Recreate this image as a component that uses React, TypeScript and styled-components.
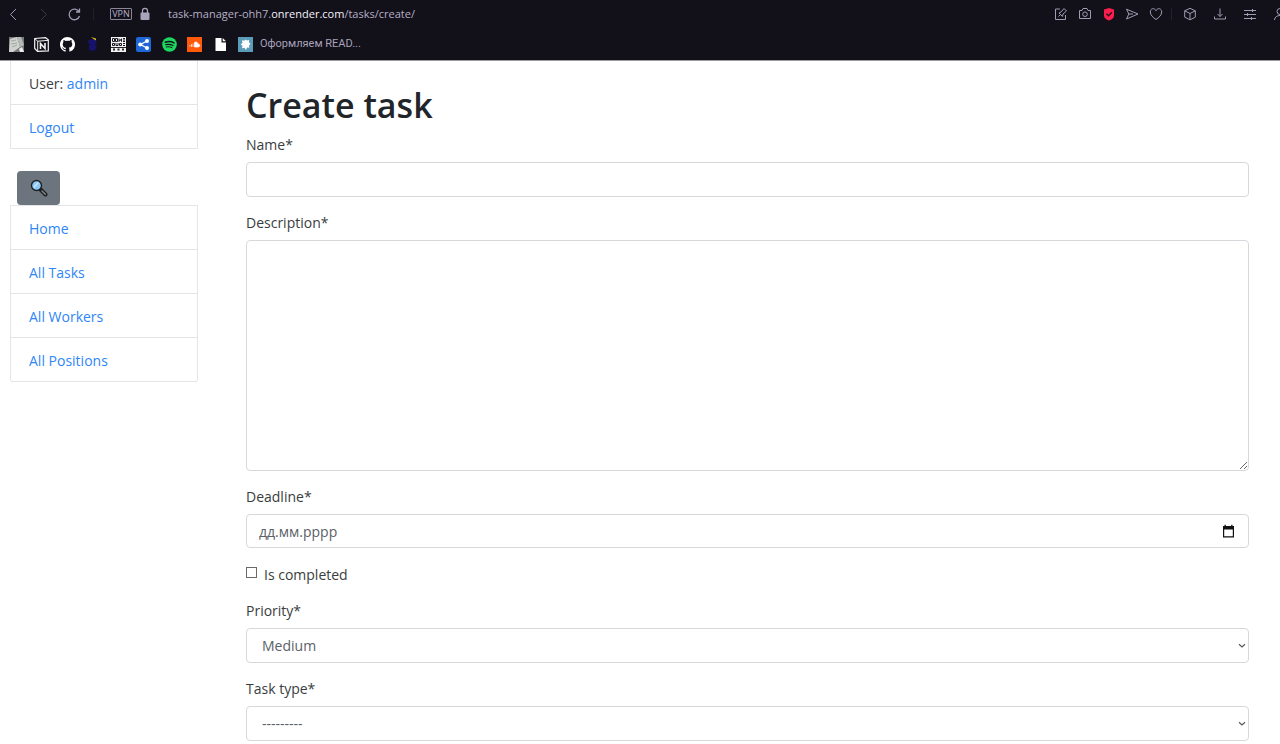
import React from 'react';
import styled, { createGlobalStyle } from 'styled-components';

const GlobalStyle = createGlobalStyle`
  *, *::before, *::after { box-sizing: border-box; }
  body {
    margin: 0;
    background: #fff;
    color: #3a3d40;
    font: 14px/21px "Open Sans", "Noto Sans", sans-serif;
  }
  a { color: #2f86f6; text-decoration: none; }
  button, input, select, textarea { font: inherit; margin: 0; }
`;

/* ---------- browser chrome ---------- */

const Chrome = styled.header`
  background: #121019;
  border-bottom: 1px solid #9c9b9f;
  color: #b5afc6;
  font-size: 11px;
  line-height: 16px;
  overflow: hidden;
`;

const AddressBar = styled.div`
  display: flex;
  align-items: center;
  height: 28px;
  padding-left: 7px;
`;

const IconButton = styled.button<{ $dim?: boolean }>`
  display: flex;
  flex: none;
  padding: 0;
  border: 0;
  background: none;
  color: ${(p) => (p.$dim ? '#3b3745' : '#a09bb2')};
`;

const NavButtons = styled.div`
  display: flex;
  gap: 16px;
`;

const Divider = styled.span`
  flex: none;
  width: 1px;
  height: 12px;
  margin: 0 12px;
  background: #23202c;
`;

const VpnBadge = styled.span`
  flex: none;
  width: 22px;
  height: 12px;
  margin: 0 7px 0 4px;
  border: 1px solid #8a859b;
  border-radius: 1px;
  font-size: 9px;
  line-height: 10px;
  text-align: center;
`;

const Url = styled.span`
  flex: 1;
  margin-left: 17px;
  white-space: nowrap;
  strong { font-weight: 400; color: #f4f2fa; }
`;

const PageTools = styled.div`
  display: flex;
  justify-content: space-between;
  width: 109px;
`;

const BrowserTools = styled.div`
  display: flex;
  gap: 16px;
  margin-right: -7px;
`;

const ToolDivider = styled(Divider)`
  margin: 0 11px 0 8px;
`;

const Bookmarks = styled.nav`
  display: flex;
  align-items: center;
  height: 32px;
  padding-left: 9px;
  font-family: Roboto, "Open Sans", sans-serif;
`;

const BookmarkIcons = styled.div`
  display: flex;
  justify-content: space-between;
  width: 244px;
  margin-right: 7px;
`;

const BookmarkLink = styled.a`
  display: flex;
  color: #a8a2ba;
`;

type IconProps = { size?: number; children: React.ReactNode; width?: number };

const LineIcon = ({ size = 14, children, width = 1 }: IconProps) => (
  <svg width={size} height={size} viewBox="0 0 14 14" fill="none" stroke="currentColor" strokeWidth={width} aria-hidden="true">
    {children}
  </svg>
);

const SiteIcon = ({ children }: { children: React.ReactNode }) => (
  <svg width="15" height="15" viewBox="0 0 15 15" aria-hidden="true">
    {children}
  </svg>
);

const pageTools = [
  {
    label: 'Edit page',
    icon: <path d="M6 2H1.500v10.500h10V8M4.500 9.500l2-2M5 6l3.500 3.500.5-2.500 3.500-3-2.500-2.500-3 3.500z" />,
  },
  {
    label: 'Snapshot',
    icon: (
      <>
        <path d="M1.500 3.500h2.500l1-2h4l1 2h2.500v8h-11z" />
        <circle cx="7" cy="7.200" r="2.300" />
      </>
    ),
  },
  {
    label: 'Ad blocker',
    icon: (
      <>
        <path d="M7 1l5 1.500v6.500c0 2-2.500 3.500-5 4.500-2.500-1-5-2.500-5-4.500V2.500z" fill="#fa1e4e" stroke="none" />
        <path d="M4.500 6.800l2 1.900 3.400-3.500" stroke="#2a0c1a" strokeWidth="1.400" />
      </>
    ),
  },
  { label: 'Send', icon: <path d="M1.500 2.200L13 7 1.500 12l2.300-5zM3.800 7H8" /> },
  {
    label: 'Add to favourites',
    icon: <path d="M7 12.500C4 10.500 1.300 8 1.300 5c0-4 4.400-4.400 5.700-1.300C8.300.6 12.700 1 12.700 5c0 3-2.700 5.500-5.700 7.500z" />,
  },
];

const browserTools = [
  { label: 'Extensions', icon: <path d="M7 1.300l5.300 2.500v6.400L7 12.800l-5.300-2.600V3.800zM1.700 3.800L7 6.500l5.300-2.700M7 6.500v6.300" /> },
  { label: 'Downloads', icon: <path d="M7 1.500v8M4.500 7L7 9.500 9.500 7M1.500 9.500v2.500h11V9.500" /> },
  {
    label: 'Easy setup',
    icon: <path d="M1 3.500h12M1 7.500h12M1 11.500h12M9.500 2v3M4.500 6v3M8.500 10v3" />,
  },
  {
    label: 'Profile',
    icon: (
      <>
        <circle cx="7" cy="4.500" r="3" />
        <path d="M1.500 13c0-6 11-6 11 0" />
      </>
    ),
  },
];

const bookmarks = [
  {
    label: 'Notes',
    icon: (
      <>
        <path d="M0 0h15v15H0z" fill="#777b78" />
        <path d="M1 2l7-2 3 10-7 5H0z" fill="#cfd2cf" />
        <path d="M8 0h4l3 8-4 2z" fill="#b5b9b6" />
        <path d="M10 12l3-2 2 5h-4z" fill="#eceeec" />
        <path d="M2 4l5-1M2 7l6-1M3 10l5-2" stroke="#a4a8a5" />
      </>
    ),
  },
  {
    label: 'Notion',
    icon: (
      <>
        <path d="M.7 1.500L11.500.7l2.800 2.200v11l-10.800.5-2.800-3z" fill="#121019" stroke="#f2f2f2" strokeWidth="1.200" />
        <path d="M1 1.800l2.700 2.400 10.400-.8M3.700 4.200v10" fill="none" stroke="#f2f2f2" />
        <path d="M6.500 12V6.500l4.500 5V6" fill="none" stroke="#f2f2f2" strokeWidth="1.600" />
      </>
    ),
  },
  {
    label: 'GitHub',
    icon: (
      <path
        transform="scale(.9375)"
        fill="#fff"
        d="M8 0C3.580 0 0 3.580 0 8c0 3.540 2.290 6.530 5.470 7.590.4.070.55-.17.55-.38v-1.490c-2.230.48-2.690-.94-2.690-.94-.36-.93-.89-1.170-.89-1.170-.73-.5.050-.49.050-.49.8.060 1.230.83 1.230.83.71 1.230 1.870.87 2.330.67.070-.52.280-.87.5-1.070-1.780-.2-3.640-.89-3.640-3.950 0-.87.31-1.590.82-2.150-.08-.2-.36-1.020.08-2.120 0 0 .67-.21 2.200.82A7.600 7.600 0 0 1 8 3.870c.68 0 1.360.09 2 .27 1.530-1.040 2.200-.82 2.200-.82.44 1.100.16 1.920.08 2.120.51.56.82 1.270.82 2.150 0 3.070-1.870 3.750-3.650 3.950.29.25.54.73.54 1.480v2.190c0 .21.15.46.55.38A8 8 0 0 0 8 0z"
      />
    ),
  },
  {
    label: 'Docs',
    icon: (
      <>
        <path d="M3.500 3l5-1 3 2v2.500l-1.500 1 1.500 1.500v3L8 14l-4-1V9l1-1.500L3 6z" fill="#17126b" />
        <path d="M6 0l5 1.500v2L8.500 2z" fill="#d8b81e" />
      </>
    ),
  },
  {
    label: 'Some Dude',
    icon: (
      <>
        <path d="M0 0h15v15H0z" fill="#f3f3f3" />
        <path d="M1.500 1.500h2v3h-2zM4.500 1.500h2v3h-2zM8 1.500v3l1.300-2 1.200 2v-3M12 1.500h2M12 3h2M12 4.500h2M1.500 6.500h2v2h-2zM5 6v2.500h2V6M8.500 6.500h2v2h-2zM12 6.500h2M12 8.500h2" fill="none" stroke="#17151c" />
        <path d="M0 10h15v1H0z" fill="#26242a" />
        <path d="M2 12.500h2M6.500 12.500h2M11 12.500h2" stroke="#26242a" strokeWidth="2" />
      </>
    ),
  },
  {
    label: 'Share',
    icon: (
      <>
        <rect width="15" height="15" rx="2" fill="#1f66d6" />
        <path d="M11 4L4.500 7.500 11 11" fill="none" stroke="#fff" strokeWidth="1.300" />
        <circle cx="11" cy="4" r="2" fill="#fff" />
        <circle cx="4.200" cy="7.500" r="2" fill="#fff" />
        <circle cx="11" cy="11" r="2" fill="#fff" />
      </>
    ),
  },
  {
    label: 'Spotify',
    icon: (
      <>
        <circle cx="7.500" cy="7.500" r="7.300" fill="#1ed760" />
        <g fill="none" stroke="#121019" strokeLinecap="round">
          <path d="M3.300 5.200c3-1 6.200-.7 8.700.7" strokeWidth="1.500" />
          <path d="M3.800 7.700c2.500-.7 5-.4 7.200.8" strokeWidth="1.200" />
          <path d="M4.300 10c2-.5 4-.3 5.800.7" />
        </g>
      </>
    ),
  },
  {
    label: 'SoundCloud',
    icon: (
      <>
        <path d="M0 0h15v15H0z" fill="#ff5a0a" />
        <path d="M7.500 10V5.500c1.500-1 3.200-.2 3.500 1.500 2.300-.3 2.300 3 .3 3zM6 6.500V10M4.500 7V10M3 8v1.500" fill="#fff" stroke="#fff" strokeWidth=".7" />
      </>
    ),
  },
  { label: 'File', icon: <path d="M2.500 1h6v4.500H13V14H2.500zM9.700 1L13 4.300H9.700z" fill="#fff" /> },
  {
    label: 'README',
    icon: (
      <>
        <path d="M0 0h15v15H0z" fill="#5b9db8" />
        <path d="M7.500 2.500l1.300 1 2.200-.5v2.300L12.500 7 11 8.500l.3 2.300-2.300-.3L8 13l-1.500-2.300-2.500.5.500-2.500L2.800 7.500l1.700-1.700L4 3.300l2.200.4z" fill="#fff" />
      </>
    ),
  },
];

/* ---------- page ---------- */

const Layout = styled.div`
  display: grid;
  grid-template-columns: 188px minmax(0, 1fr);
  column-gap: 48px;
  align-items: start;
  padding: 0 31px 0 10px;
`;

const LinkList = styled.ul<{ $attached?: boolean }>`
  margin: 0;
  padding: 0;
  list-style: none;
  border: 1px solid #e4e5e6;
  border-bottom: 0;
  border-top-width: ${(p) => (p.$attached ? 0 : '1px')};
  border-radius: ${(p) => (p.$attached ? 0 : '0 0 3px 3px')};
`;

const LinkItem = styled.li`
  height: 44px;
  padding: 12px 18px 10px;
  border-bottom: 1px solid #e4e5e6;
`;

const SearchButton = styled.button`
  display: flex;
  align-items: center;
  justify-content: center;
  width: 43px;
  height: 34px;
  margin: 22px 0 0 7px;
  padding: 0;
  border: 0;
  border-radius: 4px;
  background: #6c757d;
`;

const Main = styled.main`
  padding-top: 22px;
`;

const Title = styled.h1`
  margin: 0 0 7px;
  color: #212529;
  font-size: 34px;
  font-weight: 600;
  line-height: 44px;
`;

const Field = styled.div`
  display: flex;
  flex-direction: column;
  gap: 7px;
  margin-bottom: 15px;
`;

const boxStyle = `
  width: 100%;
  height: 35px;
  border: 1px solid #d5d9dc;
  border-radius: 4px;
  background: #fff;
  color: #5b6168;
`;

const TextInput = styled.input`
  ${boxStyle}
  padding: 0 12px;
`;

const TextArea = styled.textarea`
  ${boxStyle}
  display: block;
  height: 231px;
  padding: 6px 12px;
`;

const SelectBox = styled.div`
  display: grid;
  align-items: center;
  > * { grid-area: 1 / 1; }
  > svg {
    justify-self: end;
    margin-right: 3px;
    pointer-events: none;
  }
`;

const Select = styled.select`
  ${boxStyle}
  appearance: none;
  padding: 0 15px;
`;

const DateBox = styled.div`
  ${boxStyle}
  display: flex;
  align-items: center;
  height: 34px;
  padding: 0 12px;
`;

const DateInput = styled.input`
  flex: 1;
  min-width: 0;
  padding: 0;
  border: 0;
  background: none;
  color: inherit;
  &::placeholder { color: #5b6168; opacity: 1; }
`;

const CalendarButton = styled(IconButton)`
  color: #111;
`;

const CheckField = styled.div`
  display: flex;
  align-items: center;
  gap: 7px;
  margin-bottom: 15px;
  padding-top: 1px;
`;

const CheckBox = styled.input`
  appearance: none;
  width: 11px;
  height: 11px;
  margin-bottom: 4px;
  border: 1px solid #6a6a6a;
  background: #fff;
  &:checked { background: #2f86f6; }
`;

const SelectField = ({ id, label, options }: { id: string; label: string; options: string[] }) => (
  <Field>
    <label htmlFor={id}>{label}</label>
    <SelectBox>
      <Select id={id}>
        {options.map((o) => (
          <option key={o}>{o}</option>
        ))}
      </Select>
      <svg width="8" height="6" viewBox="0 0 8 6" aria-hidden="true">
        <path d="M1 1.300l3 2.700 3-2.700" fill="none" stroke="#55585b" strokeWidth="1.200" />
      </svg>
    </SelectBox>
  </Field>
);

const navLinks = ['Home', 'All Tasks', 'All Workers', 'All Positions'];

export default function App() {
  return (
    <>
      <GlobalStyle />
      <Chrome>
        <AddressBar>
          <NavButtons>
            <IconButton aria-label="Back">
              <LineIcon><path d="M9 2L3.500 7.500 9 13" /></LineIcon>
            </IconButton>
            <IconButton aria-label="Forward" $dim>
              <LineIcon><path d="M4 2l5.500 5.500L4 13" /></LineIcon>
            </IconButton>
            <IconButton aria-label="Reload">
              <LineIcon width={1.3}><path d="M12 4.700A5.300 5.300 0 1 0 12.500 9M12.500 1.500V5H9" /></LineIcon>
            </IconButton>
          </NavButtons>
          <Divider />
          <VpnBadge>VPN</VpnBadge>
          <IconButton aria-label="Site security">
            <svg width="12" height="14" viewBox="0 0 12 14" aria-hidden="true">
              <rect x="1.500" y="5.500" width="9" height="7.500" rx="1" fill="#aaa4bb" />
              <path d="M3.500 6V3.800a2.500 2.500 0 0 1 5 0V6" fill="none" stroke="#aaa4bb" strokeWidth="1.300" />
            </svg>
          </IconButton>
          <Url>task-manager-ohh7.<strong>onrender.com</strong>/tasks/create/</Url>
          <PageTools>
            {pageTools.map((t) => (
              <IconButton key={t.label} aria-label={t.label}><LineIcon>{t.icon}</LineIcon></IconButton>
            ))}
          </PageTools>
          <ToolDivider />
          <BrowserTools>
            {browserTools.map((t) => (
              <IconButton key={t.label} aria-label={t.label}><LineIcon>{t.icon}</LineIcon></IconButton>
            ))}
          </BrowserTools>
        </AddressBar>
        <Bookmarks>
          <BookmarkIcons>
            {bookmarks.map((b) => (
              <BookmarkLink key={b.label} href="#" aria-label={b.label}><SiteIcon>{b.icon}</SiteIcon></BookmarkLink>
            ))}
          </BookmarkIcons>
          <BookmarkLink href="#">Оформляем READ...</BookmarkLink>
        </Bookmarks>
      </Chrome>

      <Layout>
        <aside>
          <LinkList $attached>
            <LinkItem>User: <a href="#">admin</a></LinkItem>
            <LinkItem><a href="#">Logout</a></LinkItem>
          </LinkList>
          <SearchButton aria-label="Search">
            <svg width="18" height="18" viewBox="0 0 18 18" aria-hidden="true">
              <path d="M10.500 10.500l5 5" stroke="#1d2023" strokeWidth="4" strokeLinecap="round" />
              <path d="M12 12l3.300 3.300" stroke="#7c8287" strokeWidth="1.600" strokeLinecap="round" />
              <circle cx="6.500" cy="6.500" r="5" fill="#8cc8f5" stroke="#1d2023" strokeWidth="1.400" />
              <path d="M3.800 8.500l4.500-5" stroke="#c8e6fb" strokeWidth="1.600" />
            </svg>
          </SearchButton>
          <LinkList>
            {navLinks.map((l) => (
              <LinkItem key={l}><a href="#">{l}</a></LinkItem>
            ))}
          </LinkList>
        </aside>

        <Main>
          <Title>Create task</Title>
          <form>
            <Field>
              <label htmlFor="name">Name*</label>
              <TextInput id="name" type="text" />
            </Field>
            <Field>
              <label htmlFor="description">Description*</label>
              <TextArea id="description" />
            </Field>
            <Field>
              <label htmlFor="deadline">Deadline*</label>
              <DateBox>
                <DateInput id="deadline" type="text" placeholder="дд.мм.рррр" />
                <CalendarButton type="button" aria-label="Open calendar">
                  <svg width="15" height="15" viewBox="0 0 15 15" aria-hidden="true">
                    <path d="M2 2h1.500V.8h1.300V2h5.400V.8h1.300V2H13v11.500H2zM3.200 5.500v6.800h8.600V5.500z" fill="currentColor" fillRule="evenodd" />
                  </svg>
                </CalendarButton>
              </DateBox>
            </Field>
            <CheckField>
              <CheckBox id="completed" type="checkbox" />
              <label htmlFor="completed">Is completed</label>
            </CheckField>
            <SelectField id="priority" label="Priority*" options={['Medium']} />
            <SelectField id="type" label="Task type*" options={['---------']} />
          </form>
        </Main>
      </Layout>
    </>
  );
}
